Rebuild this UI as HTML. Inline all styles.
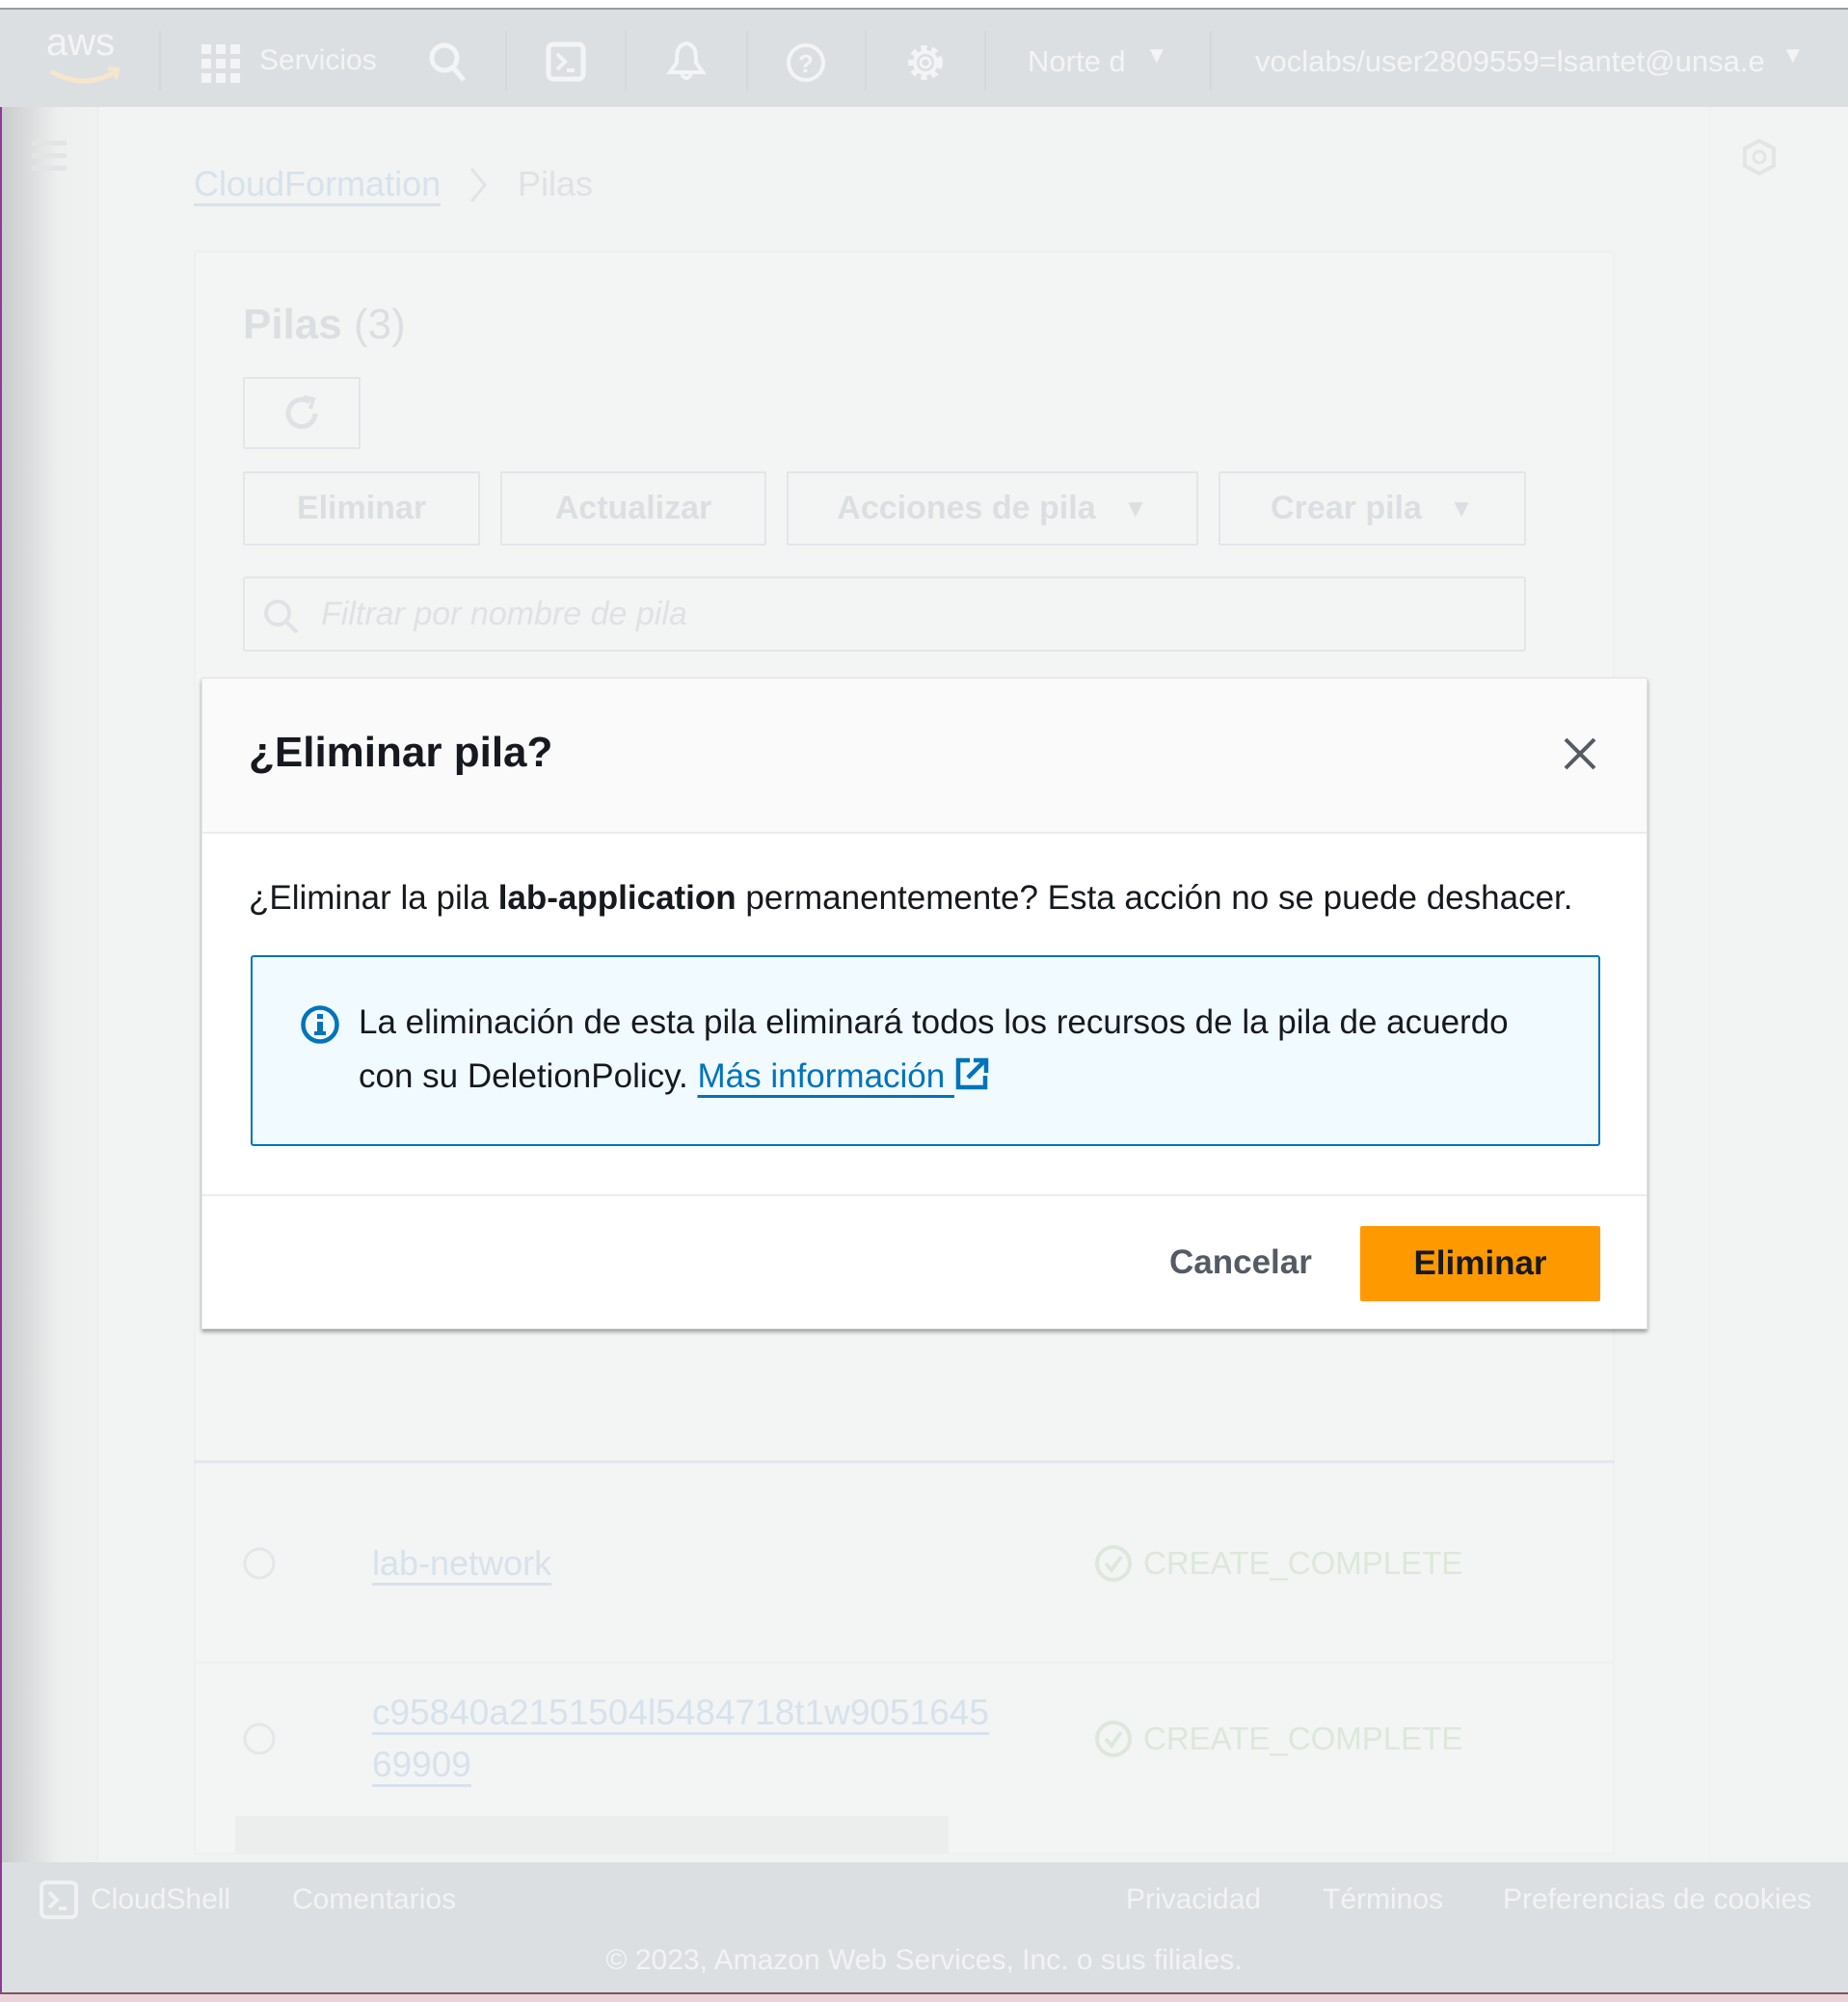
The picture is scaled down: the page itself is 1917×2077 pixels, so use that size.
<!DOCTYPE html>
<html><head><meta charset="utf-8"><style>
*{margin:0;padding:0;box-sizing:border-box}
body{width:1917px;height:2077px;position:relative;overflow:hidden;background:#f2f3f3;font-family:"Liberation Sans",sans-serif}
.a{position:absolute;white-space:nowrap}
.nav{position:absolute;left:0;top:8px;width:1917px;height:103px;background:#dcdfe1;border-top:2px solid #9a9c9e}
.nt{color:#f3f4f5;font-size:30px}
.dv{position:absolute;top:22px;width:2px;height:62px;background:#d5d8da}
.bg{color:#dfe2e4}
.btn{position:absolute;border:2px solid #e3e6e8;border-radius:2px;color:#dcdfe1;font-weight:bold;font-size:34px;display:flex;align-items:center;justify-content:center}
.lnk{color:#d6e2ec;text-decoration:underline;text-decoration-thickness:3px;text-underline-offset:8px}
.ft{color:#f2f3f4;font-size:30px}
</style></head><body>
<div class="a" style="left:0;top:0;width:1917px;height:8px;background:#fff"></div>
<div class="nav">
 <div class="a" style="left:48px;top:12px;color:#f3f4f5;font-size:40px">aws</div>
 <svg class="a" style="left:50px;top:58px" width="76" height="22"><path d="M3 6 Q38 26 70 6" stroke="#f6e6cc" stroke-width="5" fill="none"/><path d="M62 3 L72 4 L70 14" stroke="#f6e6cc" stroke-width="4" fill="none"/></svg>
 <div class="dv" style="left:165px"></div>
 <svg class="a" style="left:209px;top:36px" width="42" height="42"><g fill="#f3f4f5"><rect x="0" y="0" width="10" height="10"/><rect x="15" y="0" width="10" height="10"/><rect x="30" y="0" width="10" height="10"/><rect x="0" y="15" width="10" height="10"/><rect x="15" y="15" width="10" height="10"/><rect x="30" y="15" width="10" height="10"/><rect x="0" y="30" width="10" height="10"/><rect x="15" y="30" width="10" height="10"/><rect x="30" y="30" width="10" height="10"/></g></svg>
 <div class="a nt" style="left:269px;top:36px">Servicios</div>
 <svg class="a" style="left:444px;top:33px" width="42" height="44"><circle cx="17" cy="17" r="13" stroke="#f3f4f5" stroke-width="5" fill="none"/><path d="M26 27 L37 40" stroke="#f3f4f5" stroke-width="5"/></svg>
 <div class="dv" style="left:524px"></div>
 <svg class="a" style="left:566px;top:33px" width="42" height="42"><rect x="3" y="3" width="36" height="36" rx="5" stroke="#f3f4f5" stroke-width="5" fill="none"/><path d="M12 13 L20 21 L12 29 M22 30 H30" stroke="#f3f4f5" stroke-width="4" fill="none"/></svg>
 <div class="dv" style="left:648px"></div>
 <svg class="a" style="left:690px;top:31px" width="44" height="46"><path d="M22 4 C12 6 12 14 12 24 L5 34 H39 L32 24 C32 14 32 6 22 4Z M17 36 Q22 44 27 36" stroke="#f3f4f5" stroke-width="4" fill="none"/></svg>
 <div class="dv" style="left:774px"></div>
 <svg class="a" style="left:814px;top:33px" width="44" height="44"><circle cx="22" cy="22" r="18" stroke="#f3f4f5" stroke-width="4" fill="none"/><text x="22" y="32" text-anchor="middle" font-family="Liberation Sans" font-size="26" font-weight="bold" fill="#f3f4f5">?</text></svg>
 <div class="dv" style="left:897px"></div>
 <svg class="a" style="left:938px;top:33px" width="44" height="44"><circle cx="22" cy="22" r="15" stroke="#f3f4f5" stroke-width="6" stroke-dasharray="6 5" fill="none"/><circle cx="22" cy="22" r="11" stroke="#f3f4f5" stroke-width="4" fill="none"/><circle cx="22" cy="22" r="5" stroke="#f3f4f5" stroke-width="3" fill="none"/></svg>
 <div class="dv" style="left:1021px"></div>
 <div class="a nt" style="left:1066px;top:36px;font-size:31px">Norte d</div>
 <div class="a nt" style="left:1188px;top:34px;font-size:24px">▼</div>
 <div class="dv" style="left:1255px"></div>
 <div class="a nt" style="left:1302px;top:36px;font-size:31px">voclabs/user2809559=lsantet@unsa.e</div>
 <div class="a nt" style="left:1848px;top:34px;font-size:24px">▼</div>
</div>
<div class="a" style="left:0;top:111px;width:102px;height:1821px;background:linear-gradient(90deg,#c9cbcc,#eef0f0 60%,#f0f1f1);border-left:2px solid #8d3a9a;border-right:1px solid #e9ebeb"></div>
<div class="a" style="left:33px;top:146px;width:36px;height:5px;background:#e2e4e5;box-shadow:0 13px 0 #e2e4e5,0 26px 0 #e2e4e5"></div>
<svg class="a" style="left:1805px;top:143px" width="40" height="40"><path d="M20 3 L35 11 V29 L20 37 L5 29 V11Z" stroke="#e2e5e6" stroke-width="4" fill="none"/><circle cx="20" cy="20" r="6" stroke="#e2e5e6" stroke-width="3" fill="none"/></svg>
<div class="a" style="left:1773px;top:111px;width:2px;height:1821px;background:#eff0f0"></div>
<div class="a lnk" style="left:201px;top:170px;font-size:36px">CloudFormation</div>
<svg class="a" style="left:484px;top:172px" width="26" height="40"><path d="M5 3 L19 20 L5 37" stroke="#e1e4e6" stroke-width="3" fill="none"/></svg>
<div class="a bg" style="left:537px;top:170px;font-size:36px">Pilas</div>
<div class="a" style="left:201px;top:260px;width:1474px;height:1664px;border:2px solid #eef0f0;background:#f3f4f4"></div>
<div class="a" style="left:201px;top:1515px;width:1474px;height:3px;background:#e1e8ee"></div>
<div class="a" style="left:252px;top:312px;font-size:44px;font-weight:bold;color:#dcdfe1">Pilas <span style="font-weight:normal">(3)</span></div>
<div class="btn" style="left:252px;top:391px;width:122px;height:75px"><svg width="44" height="44"><path d="M36 22 A14 14 0 1 1 30 10" stroke="#dfe2e4" stroke-width="5" fill="none"/><path d="M24 5 L34 7 L31 17" stroke="#dfe2e4" stroke-width="4" fill="none"/></svg></div>
<div class="btn" style="left:252px;top:489px;width:246px;height:77px">Eliminar</div>
<div class="btn" style="left:519px;top:489px;width:276px;height:77px">Actualizar</div>
<div class="btn" style="left:816px;top:489px;width:427px;height:77px">Acciones de pila&nbsp;&nbsp;&nbsp;<span style="font-size:26px">▼</span></div>
<div class="btn" style="left:1264px;top:489px;width:319px;height:77px">Crear pila&nbsp;&nbsp;&nbsp;<span style="font-size:26px">▼</span></div>
<div class="a" style="left:252px;top:598px;width:1331px;height:78px;border:2px solid #e3e6e8;border-radius:3px"></div>
<svg class="a" style="left:270px;top:618px" width="44" height="44"><circle cx="18" cy="18" r="12" stroke="#e0e3e5" stroke-width="4" fill="none"/><path d="M27 27 L38 38" stroke="#e0e3e5" stroke-width="4"/></svg>
<div class="a bg" style="left:333px;top:618px;font-size:34px;font-style:italic">Filtrar por nombre de pila</div>
<svg class="a" style="left:251px;top:1604px" width="36" height="36"><circle cx="18" cy="18" r="15" stroke="#e4e6e8" stroke-width="3" fill="none"/></svg>
<div class="a lnk" style="left:386px;top:1601px;font-size:36px">lab-network</div>
<svg class="a" style="left:1135px;top:1602px" width="40" height="40"><circle cx="20" cy="20" r="17" stroke="#dde8da" stroke-width="4" fill="none"/><path d="M12 20 L18 27 L28 13" stroke="#dde8da" stroke-width="4" fill="none"/></svg>
<div class="a" style="left:1186px;top:1603px;font-size:33px;color:#dce8da">CREATE_COMPLETE</div>
<div class="a" style="left:201px;top:1724px;width:1474px;height:2px;background:#eef0f0"></div>
<svg class="a" style="left:251px;top:1786px" width="36" height="36"><circle cx="18" cy="18" r="15" stroke="#e4e6e8" stroke-width="3" fill="none"/></svg>
<div class="a lnk" style="left:386px;top:1756px;font-size:37px">c95840a2151504l5484718t1w9051645</div>
<div class="a lnk" style="left:386px;top:1810px;font-size:37px">69909</div>
<svg class="a" style="left:1135px;top:1784px" width="40" height="40"><circle cx="20" cy="20" r="17" stroke="#dde8da" stroke-width="4" fill="none"/><path d="M12 20 L18 27 L28 13" stroke="#dde8da" stroke-width="4" fill="none"/></svg>
<div class="a" style="left:1186px;top:1785px;font-size:33px;color:#dce8da">CREATE_COMPLETE</div>
<div class="a" style="left:244px;top:1884px;width:740px;height:38px;background:#eceeee"></div>
<div class="a" style="left:0;top:1932px;width:1917px;height:135px;background:#dcdfe1;border-left:2px solid #8d3a9a"></div>
<svg class="a" style="left:41px;top:1951px" width="40" height="40"><rect x="2" y="2" width="36" height="36" rx="5" stroke="#f0f1f2" stroke-width="4" fill="none"/><path d="M10 12 L18 20 L10 28 M20 29 H28" stroke="#f0f1f2" stroke-width="4" fill="none"/></svg>
<div class="a ft" style="left:94px;top:1954px">CloudShell</div>
<div class="a ft" style="left:303px;top:1954px">Comentarios</div>
<div class="a ft" style="left:1168px;top:1954px">Privacidad</div>
<div class="a ft" style="left:1372px;top:1954px">Términos</div>
<div class="a ft" style="left:1559px;top:1954px">Preferencias de cookies</div>
<div class="a ft" style="left:0;width:1917px;text-align:center;top:2017px">© 2023, Amazon Web Services, Inc. o sus filiales.</div>
<div class="a" style="left:0;top:2067px;width:1917px;height:10px;background:#e9d3d8;border-top:2px solid #7d5560"></div>
<div class="a" style="left:209px;top:703px;width:1500px;height:676px;background:#fff;border:1px solid #e3e5e6;box-shadow:0 3px 4px rgba(0,0,0,.35)">
 <div class="a" style="left:0;top:0;width:1498px;height:161px;background:#fafafa;border-bottom:2px solid #eaeded"></div>
 <div class="a" style="left:48px;top:52px;font-size:44px;font-weight:bold;color:#16191f">¿Eliminar pila?</div>
 <svg class="a" style="left:1410px;top:59px" width="38" height="38"><path d="M4 4 L34 34 M34 4 L4 34" stroke="#545b64" stroke-width="4"/></svg>
 <div class="a" style="left:48px;top:208px;font-size:35px;color:#16191f">¿Eliminar la pila <b>lab-application</b> permanentemente? Esta acción no se puede deshacer.</div>
 <div class="a" style="left:50px;top:287px;width:1400px;height:198px;background:#f1faff;border:2px solid #0073bb;border-radius:3px"></div>
 <svg class="a" style="left:101px;top:338px" width="42" height="42"><circle cx="21" cy="21" r="17.5" stroke="#0073bb" stroke-width="4.5" fill="none"/><rect x="18" y="18" width="6" height="13" fill="#0073bb"/><rect x="15" y="28" width="12" height="4" fill="#0073bb"/><rect x="18" y="10" width="6" height="5" fill="#0073bb"/></svg>
 <div class="a" style="left:162px;top:329px;font-size:35px;color:#16191f;line-height:56px">La eliminación de esta pila eliminará todos los recursos de la pila de acuerdo<br>con su DeletionPolicy. <span style="color:#0073bb;text-decoration:underline;text-decoration-thickness:3px;text-underline-offset:8px">Más información&nbsp;</span><svg width="38" height="36" style="vertical-align:-4px"><path d="M16 4 H4 V32 H32 V20" stroke="#0073bb" stroke-width="4.5" fill="none"/><path d="M14 22 L31 5 M20 4 H33 V17" stroke="#0073bb" stroke-width="4.5" fill="none"/></svg></div>
 <div class="a" style="left:0;top:535px;width:1498px;height:2px;background:#eaeded"></div>
 <div class="a" style="left:1003px;top:586px;font-size:35px;font-weight:bold;color:#545b64">Cancelar</div>
 <div class="a" style="left:1201px;top:568px;width:249px;height:78px;background:#ff9900;border-radius:2px;display:flex;align-items:center;justify-content:center;font-size:35px;font-weight:bold;color:#16191f">Eliminar</div>
</div>
</body></html>
